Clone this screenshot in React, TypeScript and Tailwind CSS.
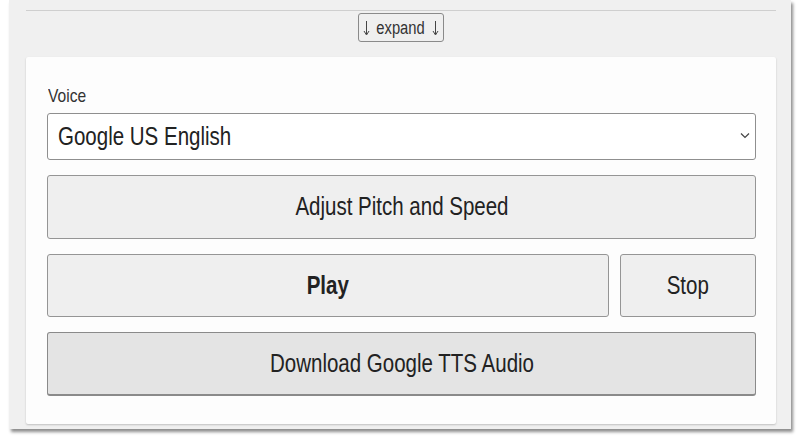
import React, { useState } from "react";

// Narrow text: no condensed font installed, so squeeze Liberation Sans
const N = ({ children }: { children: React.ReactNode }) => (
  <span className="inline-block scale-x-[0.82] whitespace-nowrap">{children}</span>
);

const Arrow = () => (
  <svg width="7" height="16" viewBox="0 0 7 16" className="shrink-0">
    <path d="M3.5 1 V14" stroke="#444" strokeWidth="1" />
    <path d="M1 11 L3.5 15 L6 11" fill="none" stroke="#444" strokeWidth="1" />
  </svg>
);

const App = () => {
  const [voice, setVoice] = useState("Google US English");

  return (
    <div className="w-[800px] h-[440px] bg-white font-['Liberation_Sans',Arial,sans-serif] text-[#222]">
      <div className="ml-[9px] w-[782px] h-[429px] bg-[#f0f0f0] pl-[17px] pr-[15px] pt-[10px] shadow-[2px_3px_3px_rgba(0,0,0,0.45)]">
        <div className="h-px bg-[#cfcfcf]" />
        <div className="flex justify-center pt-[2px]">
          <button className="h-[29px] w-[86px] rounded-[3px] border border-[#8a8a8a] bg-[#efefef] text-[18px] leading-none text-[#333] flex items-center justify-center gap-[1px]">
            <Arrow />
            <N>expand</N>
            <Arrow />
          </button>
        </div>
        <div className="mt-[15px] h-[367px] rounded-[2px] bg-[#fdfdfd] pl-[21px] pr-[20px] pt-[28px] shadow-[0_1px_2px_rgba(0,0,0,0.2)]">
          <label className="block text-[19px] leading-[22px] text-[#333] mb-[6px] ml-[1px] origin-left scale-x-[0.82]">
            Voice
          </label>
          <div className="relative">
            <select
              value={voice}
              onChange={(e) => setVoice(e.target.value)}
              className="appearance-none w-full h-[47px] rounded-[3px] border border-[#8f8f8f] bg-white pl-[10px] text-[25px] text-transparent outline-none"
            >
              <option className="text-[#222]">Google US English</option>
              <option className="text-[#222]">Google UK English Female</option>
              <option className="text-[#222]">Google UK English Male</option>
            </select>
            <span className="absolute left-[11px] top-0 h-[47px] flex items-center text-[25px] pointer-events-none origin-left scale-x-[0.82] whitespace-nowrap">
              {voice}
            </span>
            <svg
              className="absolute right-[6px] top-[19px] pointer-events-none"
              width="10"
              height="7"
              viewBox="0 0 10 7"
            >
              <path d="M1 1.5 L5 5.5 L9 1.5" fill="none" stroke="#444" strokeWidth="1.2" />
            </svg>
          </div>
          <button className="mt-[15px] w-full h-[64px] rounded-[3px] border border-[#959595] bg-[#efefef] text-[25px]">
            <N>Adjust Pitch and Speed</N>
          </button>
          <div className="mt-[15px] flex gap-[11px]">
            <button className="flex-1 h-[63px] rounded-[3px] border border-[#959595] bg-[#efefef] text-[25px] font-bold">
              <N>Play</N>
            </button>
            <button className="w-[136px] h-[63px] rounded-[3px] border border-[#959595] bg-[#efefef] text-[25px]">
              <N>Stop</N>
            </button>
          </div>
          <button className="mt-[15px] w-full h-[64px] rounded-[3px] border border-[#8a8a8a] border-b-2 bg-[#e4e4e4] text-[25px]">
            <N>Download Google TTS Audio</N>
          </button>
        </div>
      </div>
    </div>
  );
};

export default App;
